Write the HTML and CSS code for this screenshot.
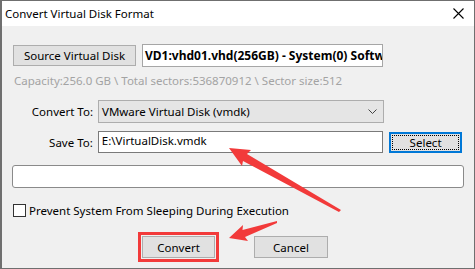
FILE: index.html
```html
<!DOCTYPE html>
<html lang="en">
<head>
    <meta charset="UTF-8">
    <title>Convert Virtual Disk Format</title>
    <link rel="stylesheet" href="styles.css">
</head>
<body>

    <div class="window">

        <div class="title-bar">
            <span class="title">Convert Virtual Disk Format</span>
            <svg class="close-icon" width="11" height="11" viewBox="0 0 11 11">
                <path d="M0.5 0.5 L10.5 10.5 M10.5 0.5 L0.5 10.5" stroke="#000" stroke-width="1.1" fill="none"/>
            </svg>
        </div>

        <div class="client">

            <div class="row source-row">
                <button class="win-btn source-btn">Source Virtual Disk</button>
                <div class="source-field">VD1:vhd01.vhd(256GB) - System(0) Software</div>
            </div>

            <p class="capacity">Capacity:256.0 GB \ Total sectors:536870912 \ Sector size:512</p>

            <div class="row form-row convert-row">
                <label class="field-label">Convert To:</label>
                <div class="combo">
                    <span>VMware Virtual Disk (vmdk)</span>
                    <svg class="chevron" width="9" height="5" viewBox="0 0 9 5">
                        <path d="M0.5 0.5 L4.5 4.5 L8.5 0.5" stroke="#444" stroke-width="1" fill="none"/>
                    </svg>
                </div>
            </div>

            <div class="row form-row save-row">
                <label class="field-label">Save To:</label>
                <div class="text-input">E:\VirtualDisk.vmdk</div>
                <button class="win-btn select-btn"><span class="focus-rect">Select</span></button>
            </div>

            <div class="progress"></div>

            <label class="check-row">
                <span class="check-box"></span>
                <span>Prevent System From Sleeping During Execution</span>
            </label>

            <div class="row action-row">
                <span class="highlight">
                    <button class="win-btn action-btn">Convert</button>
                </span>
                <button class="win-btn action-btn cancel-btn">Cancel</button>
            </div>

        </div>

        <!-- flechas rojas de la captura, van encima de todo -->
        <svg class="annotations" width="475" height="269" viewBox="0 0 475 269">
            <polygon fill="#f23a3a" points="229,148 251,150 247,154 341,210 339,212 243,161 242,166"/>
            <polygon fill="#f23a3a" points="229,238 243,225 242.5,230 277,221 277,223 245,237 248,241"/>
        </svg>

    </div>

</body>
</html>
```

FILE: styles.css
```css
/* Ventana estilo Windows 10 */
body {
    margin: 0;
    font-family: 'Noto Sans', sans-serif;
    font-size: 11.5px;
    color: #000;
}

.window {
    position: relative;
    width: 475px;
    height: 269px;
    box-sizing: border-box;
    border: 1px solid #6f6f6f;
    border-left-width: 2px;
    background-color: #f0f0f0;
    display: flex;
    flex-direction: column;
}

.title-bar {
    height: 25px;
    background-color: #fff;
    display: flex;
    align-items: center;
    justify-content: space-between;
    padding: 0 10px 0 3px;
}

.title {
    font-size: 11.5px;
}

.client {
    flex: 1;
    padding: 18px 12px 0 11px;
}

.row {
    display: flex;
    align-items: center;
}

/* --- Botones --- */
.win-btn {
    font-family: 'Noto Sans', sans-serif;
    font-size: 11.5px;
    color: #000;
    background-color: #e1e1e1;
    border: 1px solid #adadad;
    padding: 0;
    margin: 0;
}

.source-btn {
    width: 123px;
    height: 21px;
}

.source-field {
    width: 241px;
    height: 23px;
    margin-left: 6px;
    box-sizing: border-box;
    background-color: #fff;
    border: 1px solid #a6a6a6;
    padding: 2px 0 0 2px;
    font-weight: 700;
    font-size: 12px;
    white-space: nowrap;
    overflow: hidden;
}

.capacity {
    margin: 5px 0 0 1px;
    height: 18px;
    line-height: 18px;
    color: #a3a3a3;
}

/* --- Campos del formulario --- */
.convert-row {
    margin-top: 10px;
}

.save-row {
    margin-top: 8px;
}

.field-label {
    width: 80px;
    margin-right: 5px;
    text-align: right;
}

.combo {
    width: 286px;
    height: 23px;
    box-sizing: border-box;
    background-color: #e5e5e5;
    border: 1px solid #adadad;
    display: flex;
    align-items: center;
    justify-content: space-between;
    padding: 0 6px 0 3px;
}

.text-input {
    width: 286px;
    height: 22px;
    box-sizing: border-box;
    background-color: #fff;
    border: 1px solid #7a7a7a;
    padding: 1px 0 0 3px;
}

.select-btn {
    width: 73px;
    height: 21px;
    margin-left: 6px;
    border: 2px solid #0078d7;
    padding: 1px;
}

.focus-rect {
    display: block;
    height: 100%;
    box-sizing: border-box;
    border: 1px dotted #000;
    line-height: 13px;
}

.progress {
    width: 452px;
    height: 23px;
    margin: 12px 0 0 -1px;
    box-sizing: border-box;
    background-color: #fff;
    border: 1px solid #8a8a8a;
    border-radius: 3px;
}

.check-row {
    display: flex;
    align-items: center;
    margin-top: 15px;
    gap: 3px;
}

.check-box {
    width: 13px;
    height: 13px;
    box-sizing: border-box;
    background-color: #fff;
    border: 1px solid #333;
}

/* --- Botones de acción --- */
.action-row {
    margin-top: 14px;
    padding-left: 125px;
}

.highlight {
    display: flex;
    padding: 1px;
    border: 3px solid #f23a3a;
}

.action-btn {
    width: 73px;
    height: 22px;
}

.cancel-btn {
    width: 74px;
    margin-left: 35px;
}

.annotations {
    position: absolute;
    left: -2px;
    top: -1px;
    pointer-events: none;
}
```
